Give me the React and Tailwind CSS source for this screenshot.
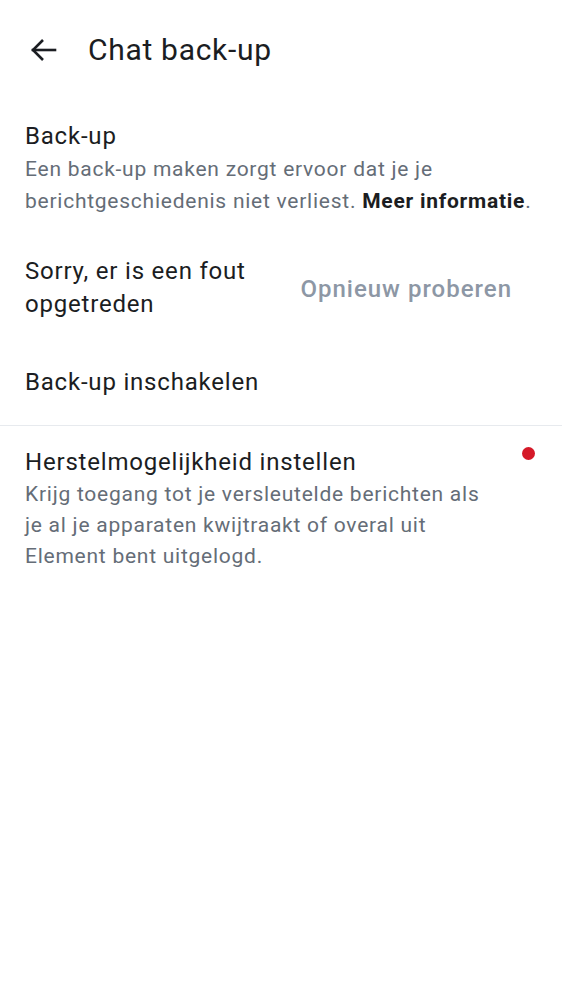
import React from "react";

export default function App() {
  return (
    <div className="w-[562px] h-[1000px] bg-white font-['Roboto',sans-serif] text-[#1b1d22]">
      <header className="flex items-center h-[100px]">
        <div className="w-[88px] flex items-center pl-[31px]">
          <svg width="26" height="24" viewBox="0 0 26 24" fill="none" stroke="#1b1d22" strokeWidth="2.6" strokeLinecap="square">
            <path d="M2 12H24" />
            <path d="M12 2L2 12L12 22" strokeLinecap="butt" strokeLinejoin="miter" />
          </svg>
        </div>
        <h1 className="text-[30px] leading-[36px] font-normal tracking-[0.7px]">Chat back-up</h1>
      </header>

      <section className="px-[25px] pt-[19px]">
        <div className="text-[24px] leading-[34px] tracking-[0.8px]">Back-up</div>
        <p className="text-[21px] leading-[32px] tracking-[0.75px] text-[#656d77]">
          Een back-up maken zorgt ervoor dat je je berichtgeschiedenis niet verliest.{" "}
          <span className="font-bold text-[#1b1d22]">Meer informatie</span>.
        </p>
      </section>

      <div className="flex items-center px-[25px] pt-[38px]">
        <div className="flex-1 text-[24px] leading-[33px] tracking-[0.8px]">
          Sorry, er is een fout
          <br />
          opgetreden
        </div>
        <div className="text-[24px] font-medium tracking-[1px] text-[#8d97a5] pr-[25px] pt-[2px]">Opnieuw proberen</div>
      </div>

      <div className="px-[25px] pt-[44px] pb-[26px] text-[24px] leading-[34px] tracking-[0.8px]">Back-up inschakelen</div>

      <div className="h-px bg-[#e7eaee]" />

      <section className="relative px-[25px] pt-[19px]">
        <span className="absolute right-[27px] top-[21px] w-[13px] h-[13px] rounded-full bg-[#d51928]" />
        <div className="text-[24px] leading-[34px] tracking-[0.8px]">Herstelmogelijkheid instellen</div>
        <p className="text-[21px] leading-[31px] tracking-[0.75px] text-[#656d77] pr-[50px]">
          Krijg toegang tot je versleutelde berichten als je al je apparaten kwijtraakt of overal uit Element bent uitgelogd.
        </p>
      </section>
    </div>
  );
}
